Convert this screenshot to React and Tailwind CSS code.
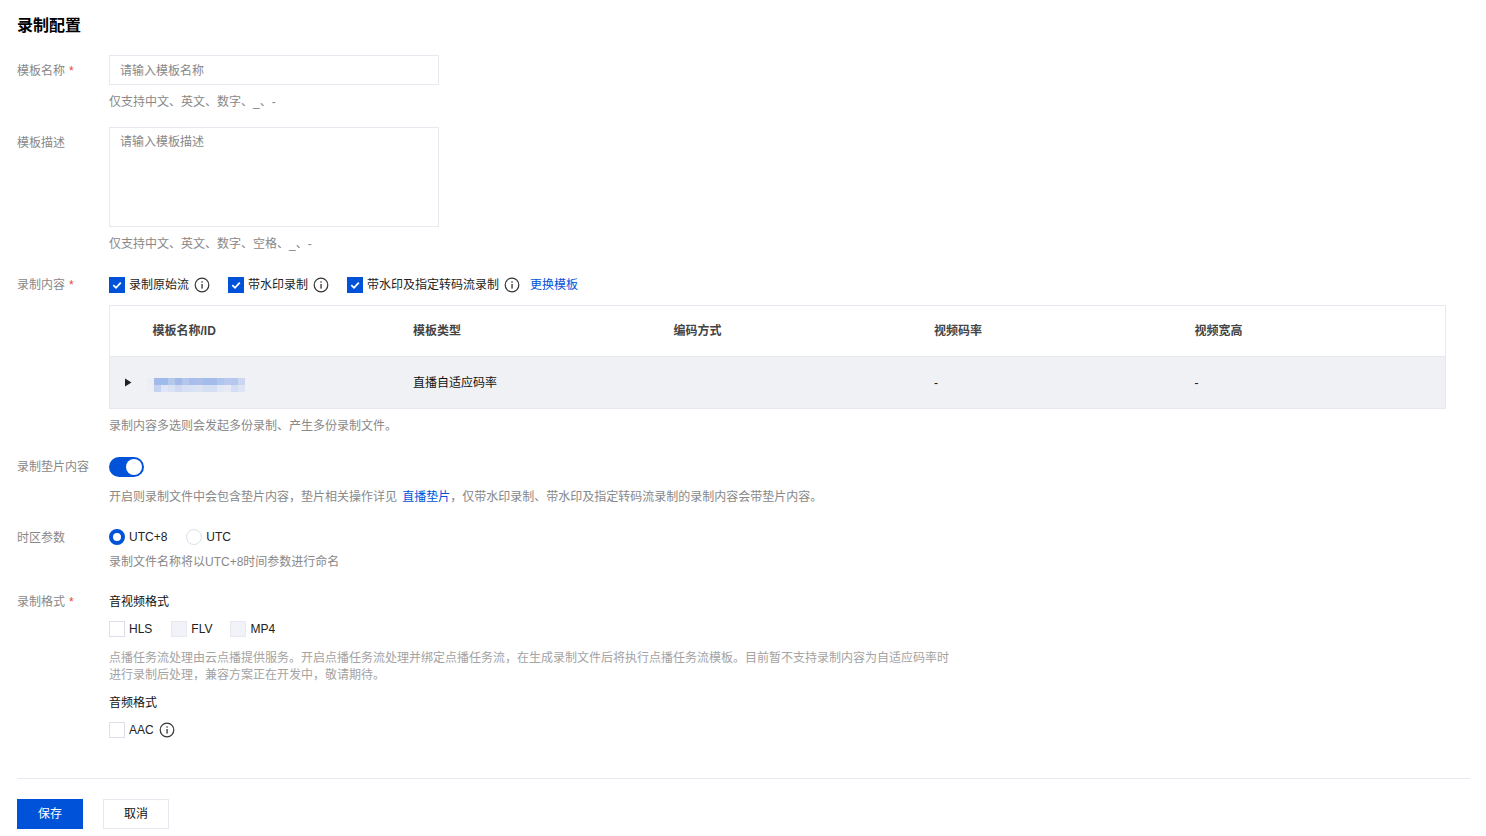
import React from "react";

const fontStack = "font-['Liberation_Sans','Noto_Sans_CJK_SC',sans-serif]";

function InfoIcon() {
  return (
    <svg width="16" height="16" viewBox="0 0 16 16" fill="none" className="shrink-0">
      <circle cx="8" cy="8" r="6.8" stroke="#333" strokeWidth="1.2" />
      <rect x="7.4" y="7" width="1.3" height="4.6" fill="#333" />
      <rect x="7.4" y="4.3" width="1.3" height="1.4" fill="#333" />
    </svg>
  );
}

function Check({ label, state = "off", info }) {
  return (
    <label className="flex items-center">
      {state === "on" && (
        <span className="w-4 h-4 bg-[#0052d9] flex items-center justify-center shrink-0">
          <svg width="12" height="12" viewBox="0 0 12 12" fill="none">
            <path d="M2.3 6.1 5 8.8 9.8 3.6" stroke="#fff" strokeWidth="1.8" />
          </svg>
        </span>
      )}
      {state === "off" && <span className="w-4 h-4 bg-white border border-[#dcdfe8] shrink-0"></span>}
      {state === "disabled" && <span className="w-4 h-4 bg-[#f2f3f8] border border-[#e7e8f0] shrink-0"></span>}
      <span className="ml-1 text-xs text-[#222]">{label}</span>
      {info && <span className="ml-[5px]"><InfoIcon /></span>}
    </label>
  );
}

function Row({ label, required, children, className, labelClass }) {
  return (
    <div className={"flex " + className}>
      <div className={"w-[92px] shrink-0 text-xs leading-[18px] text-[#888] " + labelClass}>
        {label}
        {required && <span className="ml-1 text-[#e54545]">*</span>}
      </div>
      <div className="flex-1 min-w-0">{children}</div>
    </div>
  );
}

function Help({ children, className }) {
  return <p className={"text-xs leading-[17px] text-[#888] " + className}>{children}</p>;
}

const blurTop = ["#eceef4", "#a3b9ea", "#9dbbec", "#b4c8ec", "#a3b9ea", "#b4c6ec", "#aabcea", "#acbeea", "#a0bdec", "#a5bcea", "#adc5ef", "#b8c8ee", "#b4c8ee", "#cbd6f2"];
const blurBottom = ["#eeeff5", "#c4d3f2", "#dfe5f5", "#d9e1f4", "#cfdaf2", "#d6dff3", "#d9e1f4", "#dbe3f5", "#d5dff3", "#d5dff3", "#e3e8f5", "#e8ebf5", "#d3ddf3", "#dfe4f4"];

const columns = ["模板名称/ID", "模板类型", "编码方式", "视频码率", "视频宽高"];

export default function App() {
  return (
    <div className={"w-[1486px] h-[836px] overflow-hidden bg-white pl-[17px] pr-4 " + fontStack}>
      <h2 className="h-[55px] pt-[16px] text-base leading-[20px] font-bold text-black">录制配置</h2>

      <Row label="模板名称" required labelClass="pt-[7px]">
        <div className="w-[330px] h-[30px] border border-[#e7e8f0] px-[10px] text-xs leading-[30px] text-[#888]">请输入模板名称</div>
        <Help className="mt-[9px]">仅支持中文、英文、数字、_、-</Help>
      </Row>

      <Row label="模板描述" labelClass="pt-[7px]" className="mt-[16px]">
        <div className="w-[330px] h-[100px] border border-[#e7e8f0] px-[10px] pt-[5px] text-xs leading-[18px] text-[#888]">请输入模板描述</div>
        <Help className="mt-[9px]">仅支持中文、英文、数字、空格、_、-</Help>
      </Row>

      <Row label="录制内容" required labelClass="pt-[7px]" className="mt-[16px]">
        <div className="flex items-center h-4 mt-[8px]">
          <Check state="on" label="录制原始流" info />
          <span className="ml-[18px]"><Check state="on" label="带水印录制" info /></span>
          <span className="ml-[18px]"><Check state="on" label="带水印及指定转码流录制" info /></span>
          <span className="ml-[10px] text-xs text-[#0052d9]">更换模板</span>
        </div>
        <div className="w-[1337px] mt-3 border border-[#e7e8f0]">
          <div className="flex h-[51px] items-center border-b border-[#e7e8f0] pl-[42.5px] text-xs font-bold text-[#444]">
            {columns.map((c) => (
              <div key={c} className="w-[260.5px] shrink-0">{c}</div>
            ))}
          </div>
          <div className="flex h-[51px] items-center bg-[#f0f1f5] text-xs text-[#111]">
            <div className="w-[37px] shrink-0 pl-[14px]">
              <svg width="8" height="9" viewBox="0 0 8 9"><path d="M1 0.5 7.5 4.5 1 8.5Z" fill="#222" /></svg>
            </div>
            <div className="w-[266px] shrink-0 mt-[5px]">
              <div className="flex">
                {blurTop.map((c, i) => <div key={i} className="w-[7px] h-[7px]" style={{ backgroundColor: c }}></div>)}
              </div>
              <div className="flex">
                {blurBottom.map((c, i) => <div key={i} className="w-[7px] h-[7px]" style={{ backgroundColor: c }}></div>)}
              </div>
            </div>
            <div className="w-[260.5px] shrink-0">直播自适应码率</div>
            <div className="w-[260.5px] shrink-0"></div>
            <div className="w-[260.5px] shrink-0">-</div>
            <div>-</div>
          </div>
        </div>
        <Help className="mt-[9px]">录制内容多选则会发起多份录制、产生多份录制文件。</Help>
      </Row>

      <Row label="录制垫片内容" labelClass="pt-[1px]" className="mt-[22px]">
        <div className="w-[35px] h-5 rounded-full bg-[#0052d9] flex items-center justify-end pr-[2px]">
          <span className="w-4 h-4 rounded-full bg-white"></span>
        </div>
        <Help className="mt-[12px]">
          开启则录制文件中会包含垫片内容，垫片相关操作详见 <span className="ml-[2px] text-[#0052d9]">直播垫片</span>，仅带水印录制、带水印及指定转码流录制的录制内容会带垫片内容。
        </Help>
      </Row>

      <Row label="时区参数" className="mt-[23px]">
        <div className="flex items-center h-4">
          <span className="w-4 h-4 rounded-full border-[4px] border-[#0052d9] bg-white shrink-0"></span>
          <span className="ml-1 text-xs text-[#222]">UTC+8</span>
          <span className="ml-[19px] w-4 h-4 rounded-full border border-[#dcdfe8] bg-white shrink-0"></span>
          <span className="ml-1 text-xs text-[#222]">UTC</span>
        </div>
        <Help className="mt-[9px]">录制文件名称将以UTC+8时间参数进行命名</Help>
      </Row>

      <Row label="录制格式" required className="mt-[22px]">
        <div className="text-xs leading-[18px] text-[#111]">音视频格式</div>
        <div className="flex mt-[10px]">
          <Check label="HLS" />
          <span className="ml-[19px]"><Check label="FLV" state="disabled" /></span>
          <span className="ml-[18px]"><Check label="MP4" state="disabled" /></span>
        </div>
        <Help className="mt-[13px] text-[#a3a3a3] w-[850px]">
          点播任务流处理由云点播提供服务。开启点播任务流处理并绑定点播任务流，在生成录制文件后将执行点播任务流模板。目前暂不支持录制内容为自适应码率时进行录制后处理，兼容方案正在开发中，敬请期待。
        </Help>
        <div className="mt-[10px] text-xs leading-[18px] text-[#111]">音频格式</div>
        <div className="flex mt-[10px]">
          <Check label="AAC" info />
        </div>
      </Row>

      <div className="mt-[40px] w-[1453px] border-t border-[#e7e8f0]"></div>

      <div className="flex gap-5 mt-5">
        <button className="w-[66px] h-[30px] bg-[#0052d9] text-xs text-white">保存</button>
        <button className="w-[66px] h-[30px] border border-[#e7e8f0] bg-white text-xs text-[#111]">取消</button>
      </div>
    </div>
  );
}
